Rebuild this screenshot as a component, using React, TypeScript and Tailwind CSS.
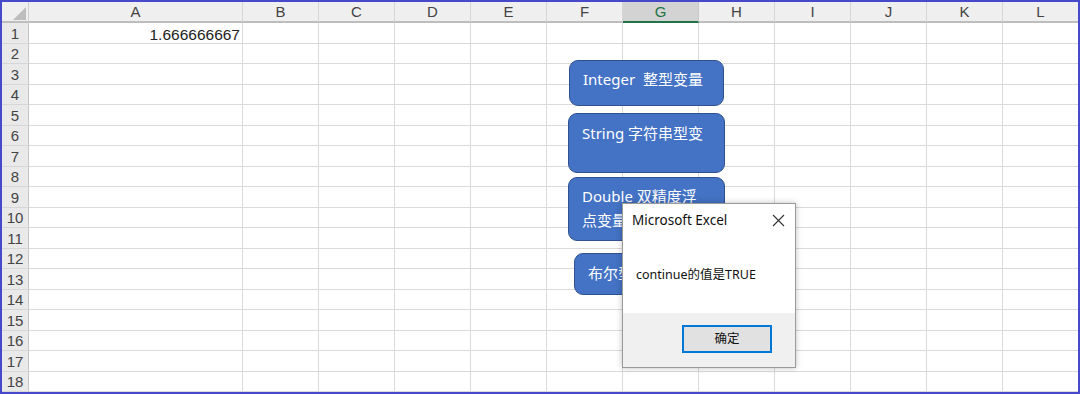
import React from 'react';

const columns = ['A', 'B', 'C', 'D', 'E', 'F', 'G', 'H', 'I', 'J', 'K', 'L'];
const rowHeights = Array.from({ length: 18 }, (_, i) => (i % 2 === 0 ? 'h-[21px]' : 'h-[20px]'));

const sans = "font-['Liberation_Sans','Noto_Sans_CJK_SC',sans-serif]";
const ui = "font-['Noto_Sans','Noto_Sans_CJK_SC',sans-serif]";

function Shape({ className, children }: { className: string; children: React.ReactNode }) {
  return (
    <div
      className={`absolute rounded-[9px] border border-[#2f528f] bg-[#4472c4] px-[13px] text-[15px] leading-[24px] text-white ${ui} ${className}`}
    >
      {children}
    </div>
  );
}

export default function App() {
  return (
    <div className="relative h-[394px] w-[1080px] overflow-hidden border-2 border-[#4848cc] bg-white">
      {/* column headers */}
      <div className="flex h-[21px] bg-[#efefef]">
        <div className="relative w-[27px] shrink-0 border-b-2 border-r border-b-[#bdbdbd] border-r-[#d0d0d0]">
          <svg className="absolute bottom-[1px] right-[2px]" width="13" height="13" viewBox="0 0 13 13">
            <path d="M13 0 L13 13 L0 13 Z" fill="#bdbdbd" />
          </svg>
        </div>
        {columns.map((c) => (
          <div
            key={c}
            className={`flex shrink-0 items-center justify-center border-r border-b-2 pt-[2px] text-[15px] ${sans} ${
              c === 'A' ? 'w-[214px]' : 'w-[76px]'
            } ${
              c === 'G'
                ? 'border-b-[#217346] border-r-[#c8c8c8] bg-[#d3d3d3] text-[#217346]'
                : 'border-b-[#bdbdbd] border-r-[#d6d6d6] text-[#444]'
            }`}
          >
            {c}
          </div>
        ))}
      </div>

      {/* rows */}
      {rowHeights.map((h, i) => (
        <div key={i} className={`flex ${h}`}>
          <div
            className={`flex w-[27px] shrink-0 items-center justify-center border-r border-b border-r-[#c6c6c6] border-b-[#d6d6d6] bg-[#e9e9e9] pt-[2px] text-[15px] text-[#444] ${sans}`}
          >
            {i + 1}
          </div>
          {columns.map((c) => (
            <div
              key={c}
              className={`flex shrink-0 items-center justify-end border-r border-b border-[#dadada] pr-[2px] pt-[3px] text-[15.5px] text-[#222] ${sans} ${
                c === 'A' ? 'w-[214px]' : 'w-[76px]'
              }`}
            >
              {i === 0 && c === 'A' ? '1.666666667' : null}
            </div>
          ))}
        </div>
      ))}

      {/* drawing objects */}
      <Shape className="left-[567px] top-[58px] h-[46px] w-[155px] pt-[6px] whitespace-pre">{'Integer  整型变量'}</Shape>
      <Shape className="left-[566px] top-[111px] h-[60px] w-[157px] pt-[7px]">String 字符串型变</Shape>
      <Shape className="left-[566px] top-[175px] h-[64px] w-[157px] pt-[6px]">
        Double 双精度浮
        <br />
        点变量
      </Shape>
      <Shape className="left-[572px] top-[251px] h-[42px] w-[160px] pt-[7px]">布尔型变量</Shape>

      {/* message box */}
      <div
        className={`absolute left-[620px] top-[201px] flex h-[165px] w-[174px] flex-col border border-[#9a9a9a] bg-white shadow-[0_0_6px_rgba(0,0,0,0.25)] ${ui}`}
      >
        <div className="flex h-[33px] items-center justify-between pl-[9px] pr-[10px]">
          <span className="text-[13.5px] text-[#111]">Microsoft Excel</span>
          <svg width="13" height="13" viewBox="0 0 13 13">
            <path d="M1 1 L12 12 M12 1 L1 12" stroke="#333" strokeWidth="1.1" />
          </svg>
        </div>
        <div className="flex h-[76px] items-center pl-[13px] text-[12.5px] text-[#111]">continue的值是TRUE</div>
        <div className="flex flex-1 items-center justify-end bg-[#f0f0f0] pb-[2px] pr-[23px]">
          <button className="flex h-[28px] w-[90px] items-center justify-center border-2 border-[#0078d7] bg-[#e1e1e1] text-[12.5px] text-[#111]">
            确定
          </button>
        </div>
      </div>
    </div>
  );
}
